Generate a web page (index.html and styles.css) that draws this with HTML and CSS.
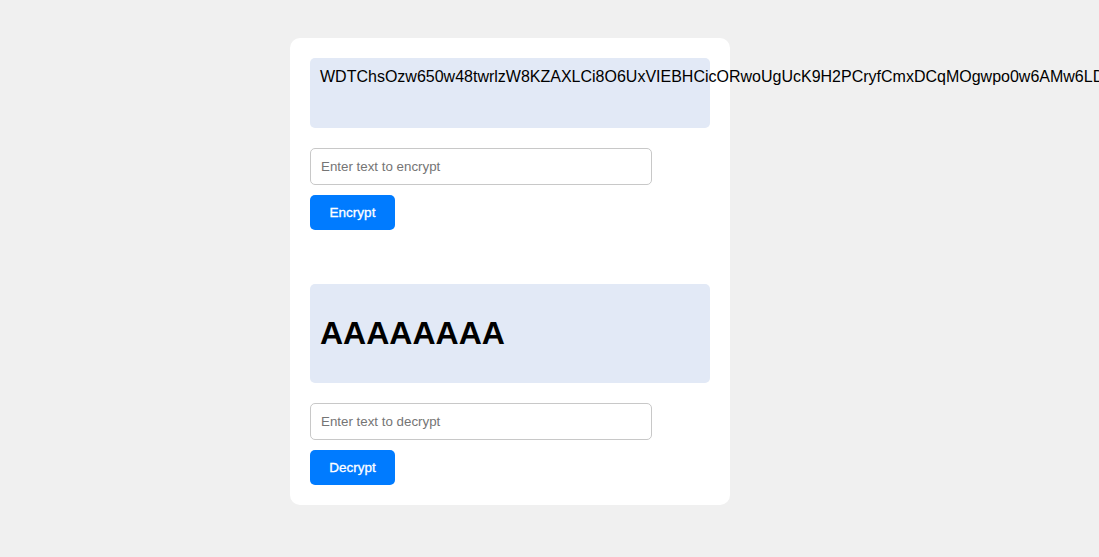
FILE: index.html
```html
<!DOCTYPE html>
<html>
<head>
<meta charset="utf-8">
<link rel="stylesheet" href="styles.css">
</head>
<body>
<div class="page">
  <div class="card">
    <div class="section">
      <div class="output">WDTChsOzw650w48twrlzW8KZAXLCi8O6UxVIEBHCicORwoUgUcK9H2PCryfCmxDCqMOgwpo0w6AMw6LDk8KDw5rCnMOTw4jCsWjCjA==</div>
      <input class="field" type="text" placeholder="Enter text to encrypt">
      <button class="btn">Encrypt</button>
    </div>
    <div class="section section-second">
      <div class="output"><h1 class="big">AAAAAAAA</h1></div>
      <input class="field" type="text" placeholder="Enter text to decrypt">
      <button class="btn">Decrypt</button>
    </div>
  </div>
</div>
</body>
</html>
```
FILE: styles.css
```css
html, body {
  margin: 0;
  padding: 0;
  overflow: hidden;
}
body {
  background: #f0f0f0;
  font-family: "Liberation Sans", Arial, sans-serif;
}
.page {
  padding: 38px 0 0 290px;
}
.card {
  width: 400px;
  padding: 20px;
  background: #ffffff;
  border-radius: 10px;
}
.section {
  display: flex;
  flex-direction: column;
  align-items: flex-start;
}
.section-second {
  margin-top: 54px;
}
.output {
  box-sizing: border-box;
  width: 400px;
  min-height: 70px;
  padding: 10px;
  background: #e2e9f6;
  border-radius: 5px;
  font-size: 16px;
  color: #000;
  white-space: nowrap;
}
.big {
  font-size: 32px;
  font-weight: bold;
  margin: 21px 0;
  line-height: 37px;
}
.field {
  box-sizing: border-box;
  width: 342px;
  height: 37px;
  margin-top: 20px;
  padding: 0 10px;
  border: 1px solid #c8c8c8;
  border-radius: 5px;
  font-family: "Liberation Sans", Arial, sans-serif;
  font-size: 13.333px;
  color: #000;
  outline: none;
}
.field::placeholder {
  color: #757575;
}
.btn {
  margin-top: 10px;
  height: 35px;
  width: 85px;
  padding: 0;
  border: none;
  border-radius: 5px;
  background: #007bff;
  color: #fff;
  font-family: "Liberation Sans", Arial, sans-serif;
  font-size: 13.5px;
  -webkit-text-stroke: 0.3px #fff;
  cursor: pointer;
}
```
